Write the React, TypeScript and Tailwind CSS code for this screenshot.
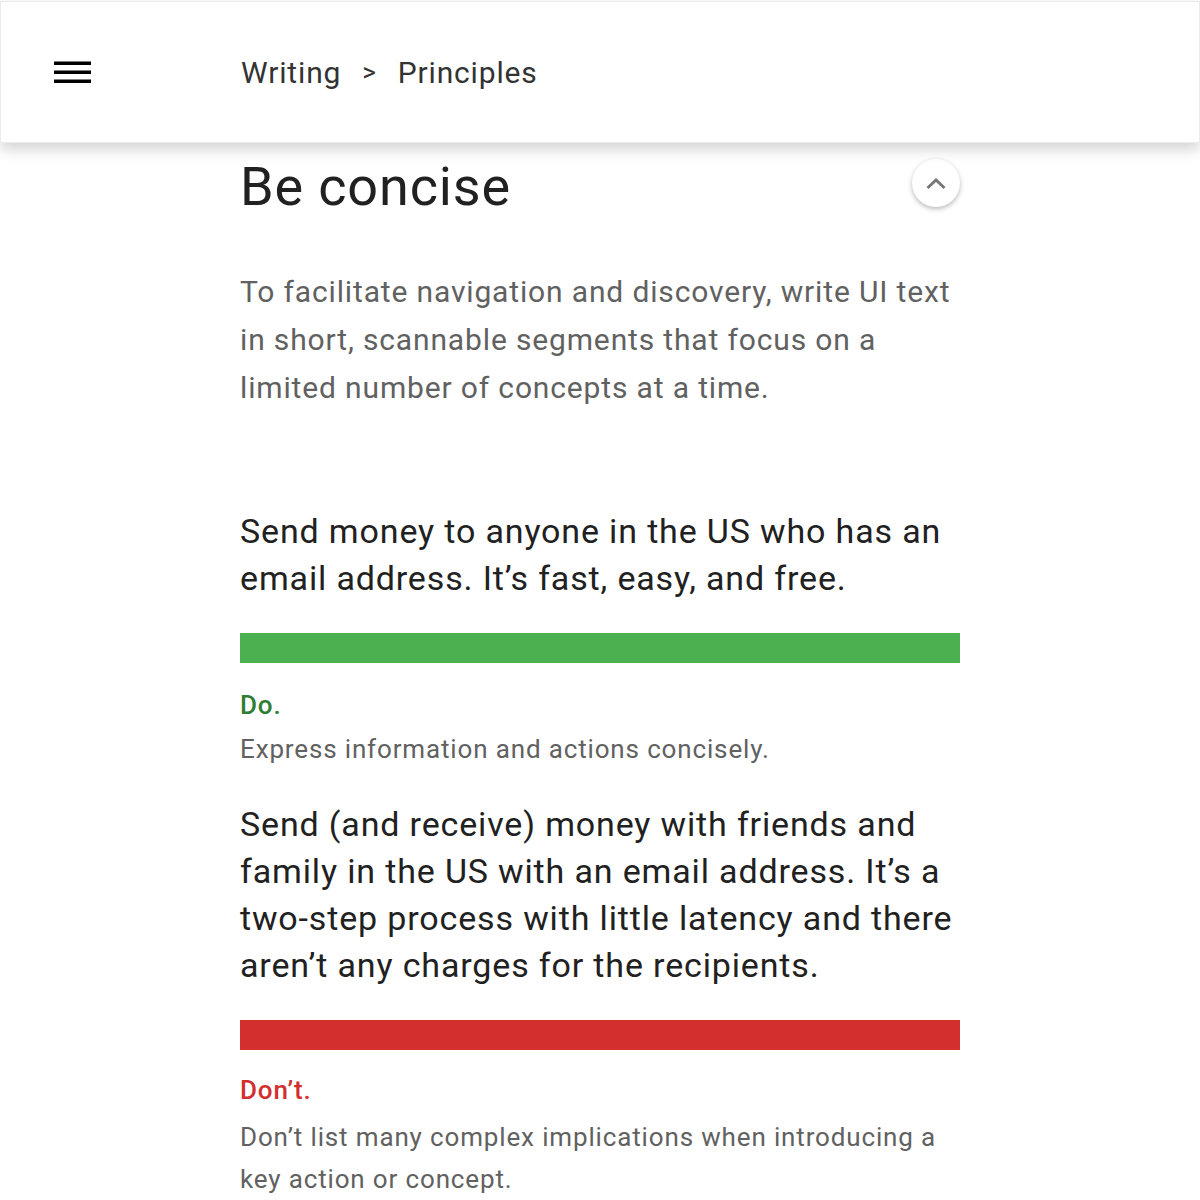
import React from 'react';

function MenuIcon() {
  return (
    <svg width="37" height="24" viewBox="0 0 37 24" aria-hidden="true">
      <rect x="0" y="1.5" width="37" height="3.5" fill="#000" />
      <rect x="0" y="10.5" width="37" height="3.5" fill="#000" />
      <rect x="0" y="19.5" width="37" height="3.5" fill="#000" />
    </svg>
  );
}

function ChevronUp() {
  return (
    <svg width="22" height="13" viewBox="0 0 22 13" aria-hidden="true">
      <path d="M2.5 11 L11 3 L19.5 11" fill="none" stroke="#757575" strokeWidth="2.8" />
    </svg>
  );
}

function Example({
  text,
  kind,
  caption,
}: {
  text: string;
  kind: 'do' | 'dont';
  caption: string;
}) {
  const isDo = kind === 'do';
  return (
    <div>
      <p className="text-[34px] leading-[46.7px] text-[#212121]">{text}</p>
      <div className={isDo ? 'mt-[32px] h-[30px] bg-[#4caf50]' : 'mt-[32px] h-[30px] bg-[#d32f2f]'} />
      <p
        className={
          isDo
            ? 'mt-[22px] text-[26px] leading-[40px] font-medium text-[#2e7d32]'
            : 'mt-[20px] text-[26px] leading-[40px] font-medium text-[#d32f2f]'
        }
      >
        {isDo ? 'Do.' : 'Don’t.'}
      </p>
      <p className={isDo ? 'mt-[3px] text-[26px] leading-[42px] text-[#616161]' : 'mt-[6px] text-[26px] leading-[42px] text-[#616161]'}>
        {caption}
      </p>
    </div>
  );
}

export default function App() {
  return (
    <div className="relative min-h-[1200px] bg-white font-['Roboto','Liberation_Sans',sans-serif] tracking-[0.85px]">
      <header className="absolute left-0 right-0 top-[1px] z-10 flex h-[142px] items-center border border-[#ececec] bg-white shadow-[0_6px_14px_rgba(0,0,0,0.18)]">
        <div className="flex w-[240px] pl-[53px]">
          <MenuIcon />
        </div>
        <nav className="flex items-center text-[30px] text-[#333]">
          <span>Writing</span>
          <span className="mx-[21px] text-[26px]">&gt;</span>
          <span>Principles</span>
        </nav>
      </header>

      <main className="mx-auto w-[720px]">
        <div className="h-[2px] overflow-hidden" aria-hidden="true">
          <p className="-mt-[46px] text-[30px] leading-[48px] text-[#9e9e9e]">
            make it easy to understand so users can find what they need
          </p>
        </div>

        <div className="mt-[153px] flex items-center justify-between">
          <h1 className="text-[54px] leading-[64px] text-[#212121]">Be concise</h1>
          <button className="-mt-[8px] flex h-[48px] w-[48px] items-center justify-center rounded-full bg-white shadow-[0_2px_5px_rgba(0,0,0,0.28)]">
            <ChevronUp />
          </button>
        </div>

        <p className="mt-[49px] text-[30px] leading-[48px] text-[#616161]">
          To facilitate navigation and discovery, write UI text in short, scannable segments that
          focus on a limited number of concepts at a time.
        </p>

        <div className="mt-[96px]">
          <Example
            kind="do"
            text="Send money to anyone in the US who has an email address. It’s fast, easy, and free."
            caption="Express information and actions concisely."
          />
        </div>

        <div className="mt-[31px]">
          <Example
            kind="dont"
            text="Send (and receive) money with friends and family in the US with an email address. It’s a two-step process with little latency and there aren’t any charges for the recipients."
            caption="Don’t list many complex implications when introducing a key action or concept."
          />
        </div>
      </main>
    </div>
  );
}
